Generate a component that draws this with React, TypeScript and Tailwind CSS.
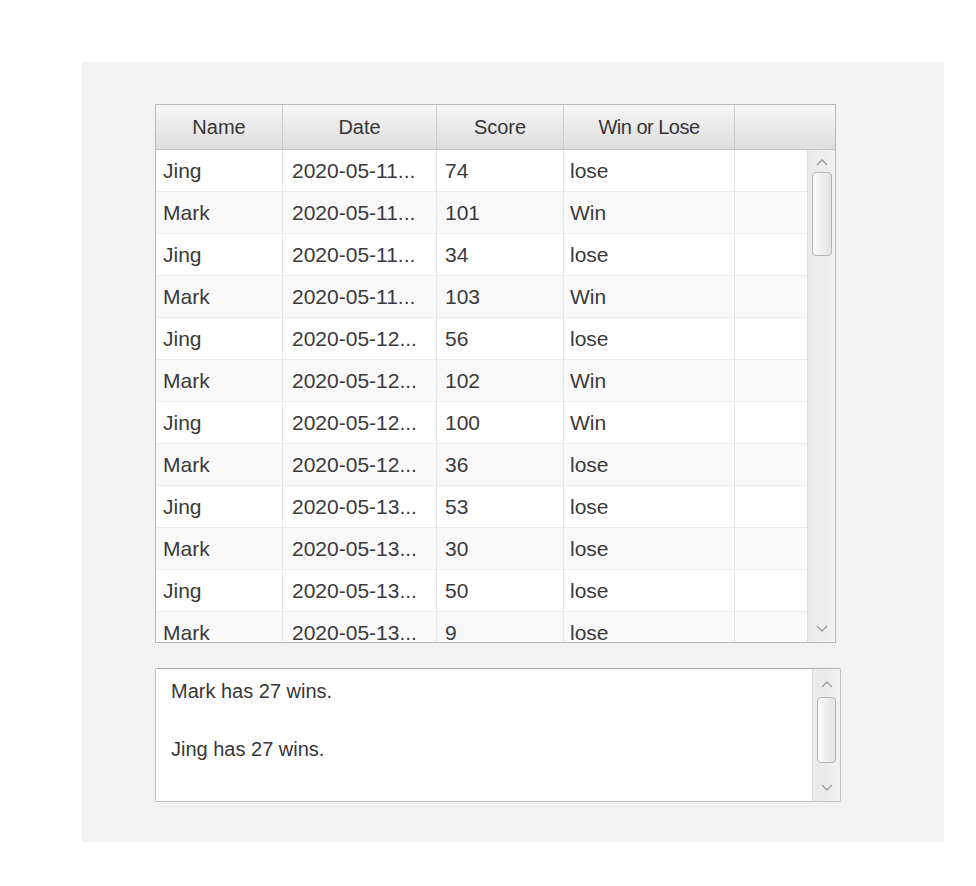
import React from "react";

const rows: [string, string, string, string][] = [
  ["Jing", "2020-05-11...", "74", "lose"],
  ["Mark", "2020-05-11...", "101", "Win"],
  ["Jing", "2020-05-11...", "34", "lose"],
  ["Mark", "2020-05-11...", "103", "Win"],
  ["Jing", "2020-05-12...", "56", "lose"],
  ["Mark", "2020-05-12...", "102", "Win"],
  ["Jing", "2020-05-12...", "100", "Win"],
  ["Mark", "2020-05-12...", "36", "lose"],
  ["Jing", "2020-05-13...", "53", "lose"],
  ["Mark", "2020-05-13...", "30", "lose"],
  ["Jing", "2020-05-13...", "50", "lose"],
  ["Mark", "2020-05-13...", "9", "lose"],
];

function Chevron({ up }: { up?: boolean }) {
  return (
    <svg width="12" height="8" viewBox="0 0 12 8" className="block">
      <polyline
        points={up ? "1,7 6,2 11,7" : "1,1 6,6 11,1"}
        fill="none"
        stroke="#9a9a9a"
        strokeWidth="1.3"
      />
    </svg>
  );
}

export default function App() {
  return (
    <div
      className="w-[976px] h-[886px] bg-white pt-[62px] pl-[82px]"
      style={{ fontFamily: '"Liberation Sans", Arial, sans-serif' }}
    >
      <div className="w-[862px] h-[780px] bg-[#f2f2f2] pt-[42px] pl-[73px] flex flex-col">
        {/* Table */}
        <div className="w-[681px] h-[539px] border border-[#b9b9b9] bg-white flex flex-col overflow-hidden">
          {/* Header */}
          <div className="h-[45px] flex shrink-0 border-b border-[#c4c4c4] bg-gradient-to-b from-[#f6f6f6] to-[#dedede] text-[20px] text-[#363636]">
            <div className="w-[127px] flex items-center justify-center border-r border-[#cbcbcb]">Name</div>
            <div className="w-[154px] flex items-center justify-center border-r border-[#cbcbcb]">Date</div>
            <div className="w-[127px] flex items-center justify-center border-r border-[#cbcbcb]">Score</div>
            <div className="w-[171px] flex items-center justify-center border-r border-[#cbcbcb] tracking-[-0.5px]">Win or Lose</div>
            <div className="flex-1" />
          </div>
          {/* Body */}
          <div className="flex flex-1 min-h-0">
            <div className="w-[651px] overflow-hidden text-[21px] text-[#3a3a3a]">
              {rows.map((r, i) => (
                <div
                  key={i}
                  className={`h-[42px] flex border-b border-[#ececec] ${i % 2 === 1 ? "bg-[#f9f9f9]" : "bg-white"}`}
                >
                  <div className="w-[127px] pl-[7px] flex items-center border-r border-[#e6e6e6]">{r[0]}</div>
                  <div className="w-[154px] pl-[9px] flex items-center border-r border-[#e6e6e6]">{r[1]}</div>
                  <div className="w-[127px] pl-[8px] flex items-center border-r border-[#e6e6e6]">{r[2]}</div>
                  <div className="w-[171px] pl-[6px] flex items-center border-r border-[#e6e6e6]">{r[3]}</div>
                  <div className="flex-1" />
                </div>
              ))}
            </div>
            {/* Scrollbar */}
            <div className="w-[28px] border-l border-[#dcdcdc] bg-gradient-to-r from-[#e9e9e9] to-[#f1f1f1] flex flex-col items-center">
              <div className="h-[22px] flex items-center justify-center pt-[2px]">
                <Chevron up />
              </div>
              <div className="w-[20px] h-[84px] ml-[1px] rounded-[4px] border border-[#b4b4b4] bg-gradient-to-r from-[#fafafa] to-[#e4e4e4]" />
              <div className="flex-1" />
              <div className="h-[20px] flex items-center justify-center pb-[6px]">
                <Chevron />
              </div>
            </div>
          </div>
        </div>

        {/* Text area */}
        <div className="mt-[25px] w-[686px] h-[134px] border border-[#c2c2c2] border-t-[#b0b0b0] rounded-[2px] bg-white flex overflow-hidden">
          <div className="flex-1 pl-[15px] pt-[8px] text-[20px] leading-[29px] text-[#363636]">
            <div>Mark has 27 wins.</div>
            <div>&nbsp;</div>
            <div>Jing has 27 wins.</div>
          </div>
          <div className="w-[28px] border-l border-[#dcdcdc] bg-gradient-to-r from-[#e9e9e9] to-[#f1f1f1] flex flex-col items-center">
            <div className="h-[26px] flex items-center justify-center pt-[4px]">
              <Chevron up />
            </div>
            <div className="w-[19px] h-[66px] mt-[2px] rounded-[4px] border border-[#b4b4b4] bg-gradient-to-r from-[#fafafa] to-[#e4e4e4]" />
            <div className="flex-1" />
            <div className="h-[22px] flex items-center justify-center pb-[4px]">
              <Chevron />
            </div>
          </div>
        </div>
      </div>
    </div>
  );
}
